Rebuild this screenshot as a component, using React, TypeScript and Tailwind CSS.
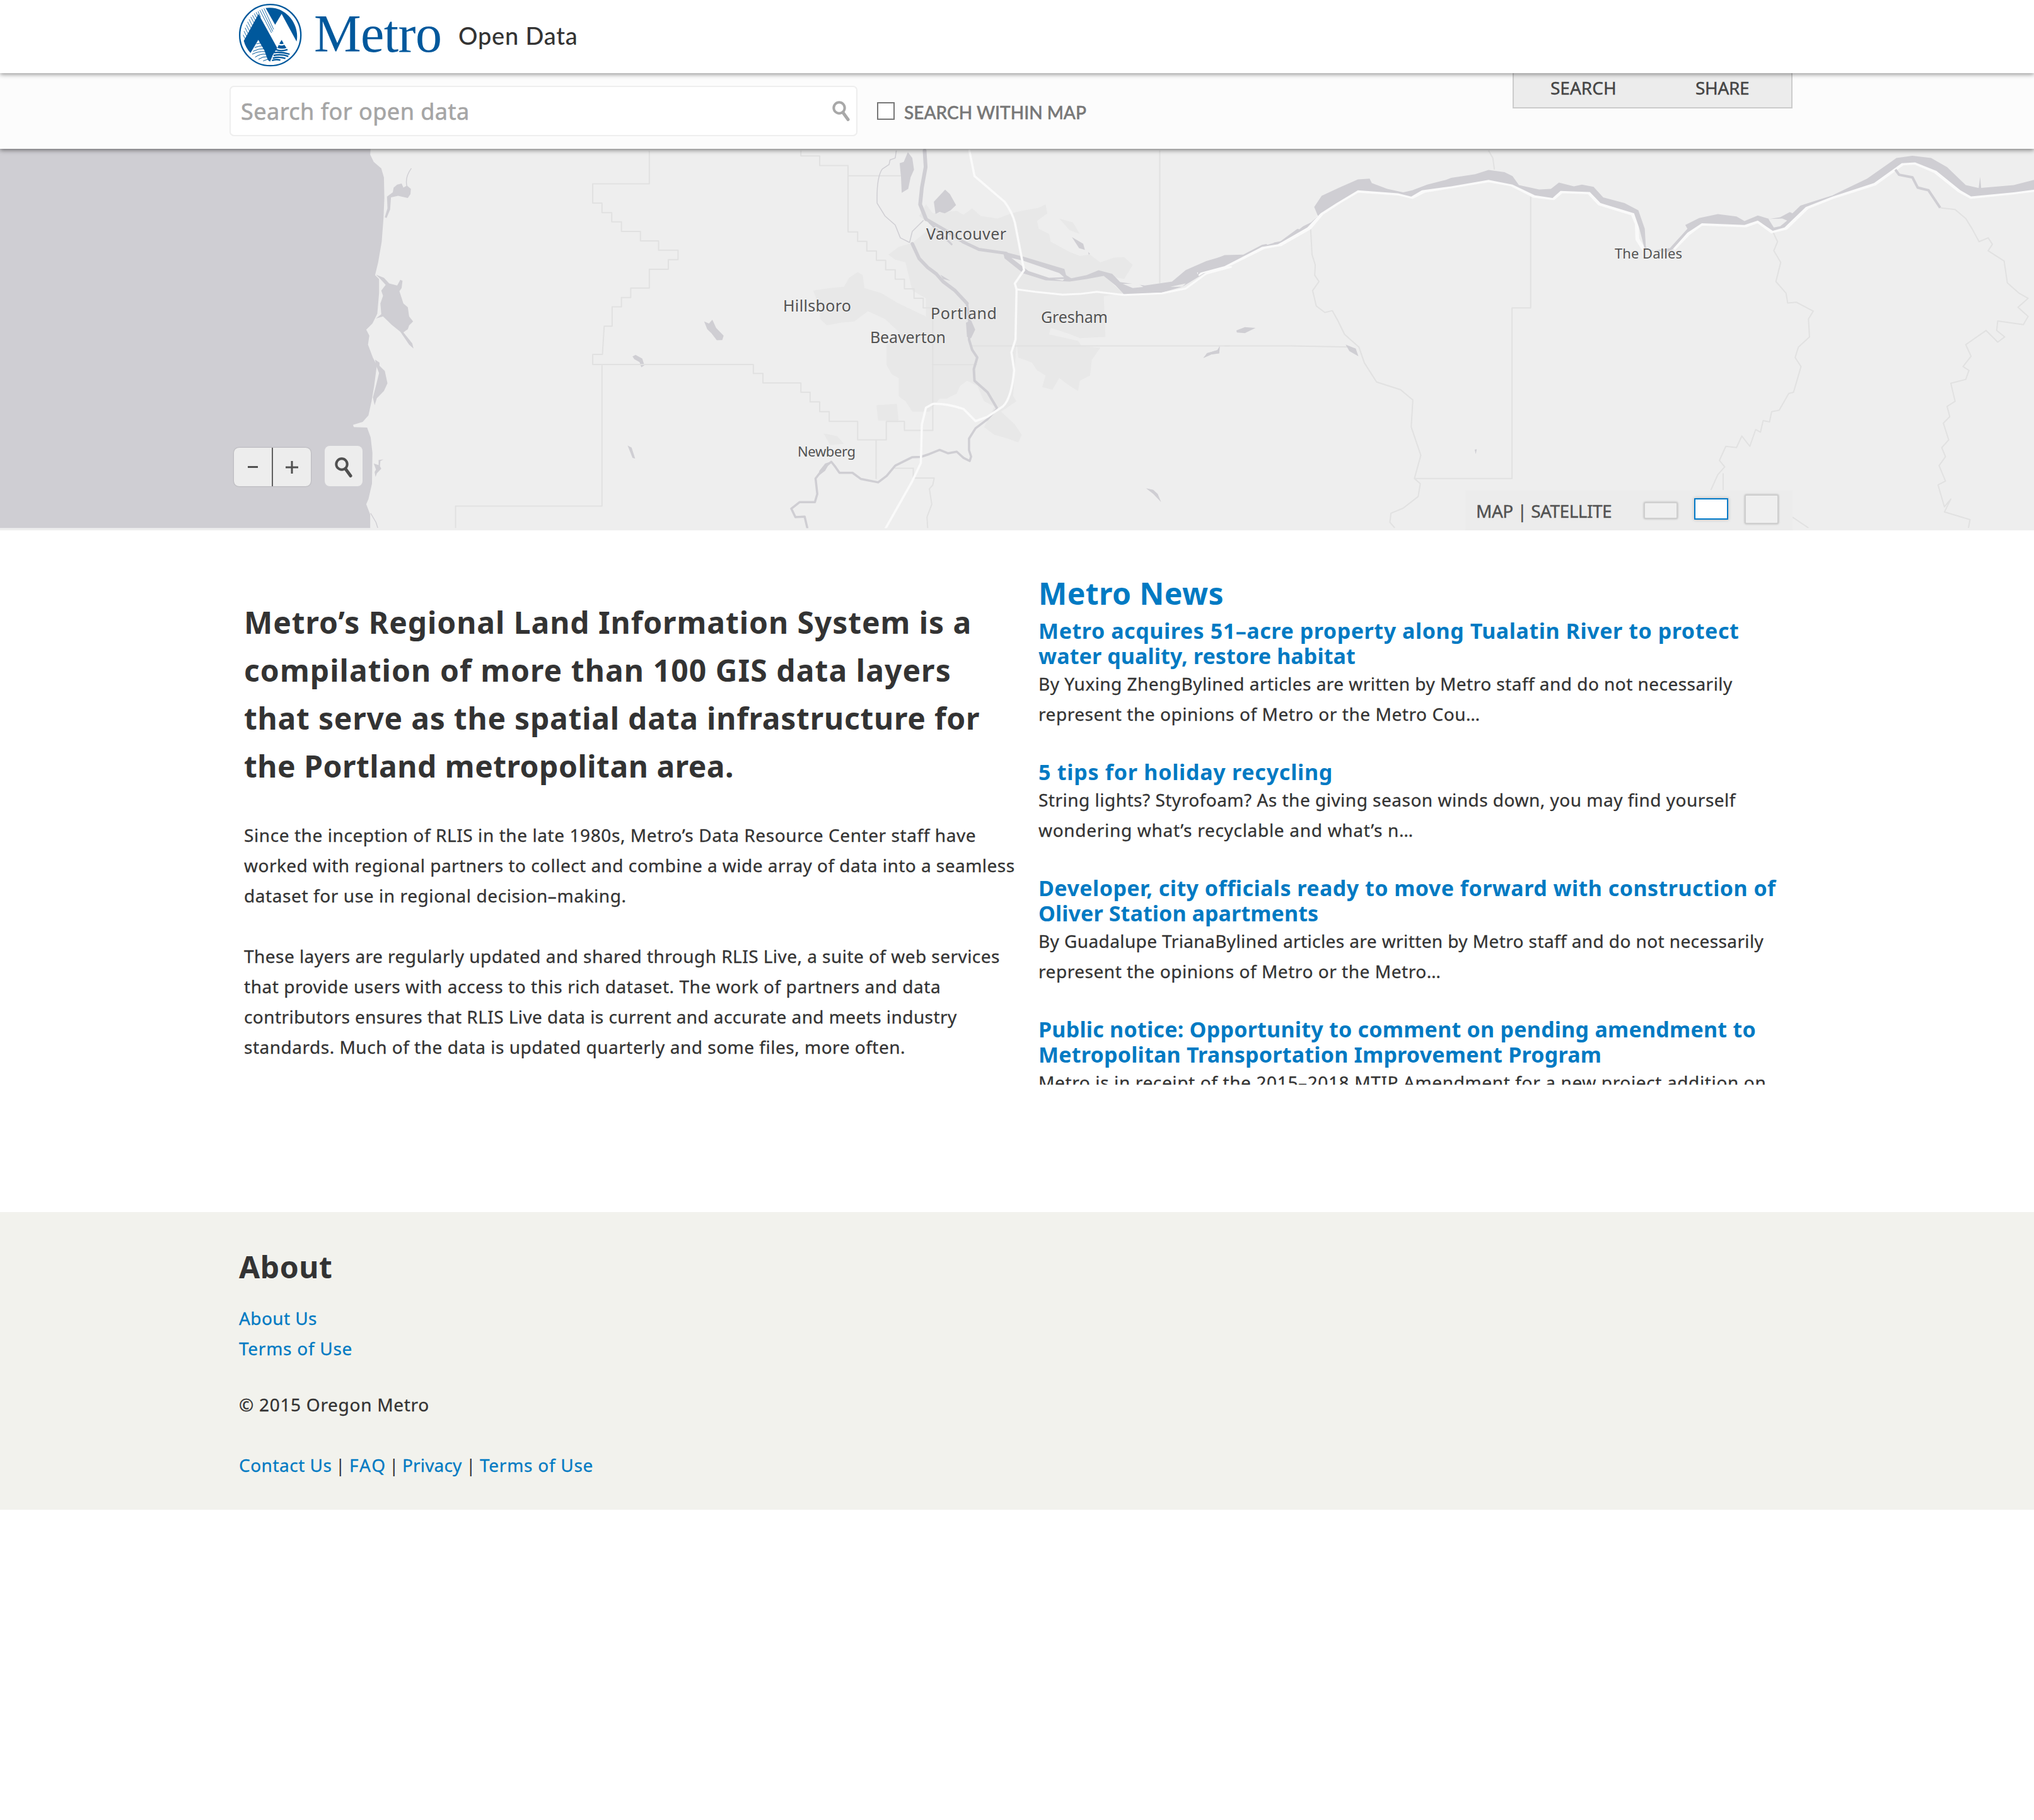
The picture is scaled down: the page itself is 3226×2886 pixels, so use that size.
import React from "react";

const WATER = "#cfced3";
const LAND = "#eeeeee";
const URBAN = "#e8e8e8";
const BOUNDARY = "#e1e1e1";

type Line = { text: string; tracking: string };

const intro: Line[] = [
  { text: "Metro’s Regional Land Information System is a", tracking: "tracking-[0.93px]" },
  { text: "compilation of more than 100 GIS data layers", tracking: "tracking-[1.06px]" },
  { text: "that serve as the spatial data infrastructure for", tracking: "tracking-[0.763px]" },
  { text: "the Portland metropolitan area.", tracking: "tracking-[0.5px]" },
];

const paragraphs: Line[][] = [
  [
    { text: "Since the inception of RLIS in the late 1980s, Metro’s Data Resource Center staff have", tracking: "tracking-[0.582px]" },
    { text: "worked with regional partners to collect and combine a wide array of data into a seamless", tracking: "tracking-[0.47px]" },
    { text: "dataset for use in regional decision–making.", tracking: "tracking-[0.589px]" },
  ],
  [
    { text: "These layers are regularly updated and shared through RLIS Live, a suite of web services", tracking: "tracking-[0.46px]" },
    { text: "that provide users with access to this rich dataset. The work of partners and data", tracking: "tracking-[0.55px]" },
    { text: "contributors ensures that RLIS Live data is current and accurate and meets industry", tracking: "tracking-[0.428px]" },
    { text: "standards. Much of the data is updated quarterly and some files, more often.", tracking: "tracking-[0.508px]" },
  ],
];

const news: { title: Line[]; body: Line[] }[] = [
  {
    title: [
      { text: "Metro acquires 51–acre property along Tualatin River to protect", tracking: "tracking-[0.57px]" },
      { text: "water quality, restore habitat", tracking: "tracking-[0.107px]" },
    ],
    body: [
      { text: "By Yuxing ZhengBylined articles are written by Metro staff and do not necessarily", tracking: "tracking-[0.463px]" },
      { text: "represent the opinions of Metro or the Metro Cou…", tracking: "tracking-[0.56px]" },
    ],
  },
  {
    title: [{ text: "5 tips for holiday recycling", tracking: "tracking-[0.75px]" }],
    body: [
      { text: "String lights? Styrofoam? As the giving season winds down, you may find yourself", tracking: "tracking-[0.494px]" },
      { text: "wondering what’s recyclable and what’s n…", tracking: "tracking-[0.701px]" },
    ],
  },
  {
    title: [
      { text: "Developer, city officials ready to move forward with construction of", tracking: "tracking-[0.463px]" },
      { text: "Oliver Station apartments", tracking: "tracking-[0.109px]" },
    ],
    body: [
      { text: "By Guadalupe TrianaBylined articles are written by Metro staff and do not necessarily", tracking: "tracking-[0.4px]" },
      { text: "represent the opinions of Metro or the Metro…", tracking: "tracking-[0.54px]" },
    ],
  },
  {
    title: [
      { text: "Public notice: Opportunity to comment on pending amendment to", tracking: "tracking-[0.245px]" },
      { text: "Metropolitan Transportation Improvement Program", tracking: "tracking-[0.23px]" },
    ],
    body: [{ text: "Metro is in receipt of the 2015–2018 MTIP Amendment for a new project addition on", tracking: "tracking-[0.63px]" }],
  },
];

function Lines({ lines }: { lines: Line[] }) {
  return (
    <>
      {lines.map((l) => (
        <span key={l.text} className={`block whitespace-nowrap ${l.tracking}`}>
          {l.text}
        </span>
      ))}
    </>
  );
}

function Logo() {
  return (
    <svg className="h-[112px] w-[112px] shrink-0" viewBox="0 0 336 336">
      <circle cx="164" cy="167" r="145.5" fill="#fff" stroke="#00589c" strokeWidth="7" />
      <path d="M142 38 Q165 34 190 40 C240 52 286 100 291 160 Q293 184 289 197 L218 66 L187 118 Z" fill="#00589c" />
      <path d="M108 67 L38 194 Q46 226 70 252 L107 190 L136 240 L152 285 L163 293 L176 262 L197 228 Z" fill="#00589c" />
      <g stroke="#00589c" strokeWidth="2.6" fill="none">
        <path d="M134 40 L180 140 M124 44 L176 150 M114 48 L170 156 M106 54 L118 82" />
        <path d="M97 58 L104 74 M88 64 L98 84 M79 72 L92 96 M71 80 L86 108 M63 92 L79 122 M56 104 L72 134 M50 118 L65 148 M44 132 L58 160 M39 148 L51 172 M35 166 L44 184" />
      </g>
      <g stroke="#00589c" strokeWidth="3" fill="none">
        <path d="M98 208 Q108 208 118 204 M90 226 Q110 218 128 218 M82 244 Q110 230 134 232 M78 258 Q110 242 140 246 M92 272 Q118 254 144 258 M108 282 Q130 268 148 270 M130 290 L152 282" />
      </g>
      <path d="M218 190 L228 208 Q218 212 207 208 Z M204 214 Q218 220 231 213 L241 228 Q222 236 198 228 Z" fill="#00589c" />
      <g stroke="#00589c" fill="none" strokeWidth="7">
        <path d="M190 236 Q216 246 246 236 M182 250 Q220 246 256 258 M180 264 Q214 256 250 268 M176 277 Q204 268 236 278 M172 288 Q192 280 212 286" />
      </g>
    </svg>
  );
}

function Magnifier({ className }: { className: string }) {
  return (
    <svg className={className} viewBox="0 0 28 33" fill="none" stroke="currentColor">
      <circle cx="11" cy="11" r="8.7" strokeWidth="4" />
      <path d="M17 18.5 L25 29.5" strokeWidth="5" strokeLinecap="round" />
    </svg>
  );
}

/* x, baseline, width, font size */
const cities: [string, number, number, number, number][] = [
  ["Vancouver", 1469, 380, 127, 25],
  ["Hillsboro", 1242, 494, 108, 25],
  ["Portland", 1476, 506, 105, 25],
  ["Gresham", 1651, 512, 106, 25],
  ["Beaverton", 1380, 544, 120, 25],
  ["Newberg", 1265, 724, 92, 22],
  ["The Dalles", 2561, 410, 107, 22],
];

function MapDrawing() {
  return (
    <svg className="absolute inset-0 h-full w-full" viewBox="0 236 3226 605" fontFamily="'Noto Sans', sans-serif">
      {/* coast */}
      <g transform="translate(0 220) scale(0.70152 0.40816)" fill={WATER} strokeLinejoin="round">
        <path d="M0 30 H838 L837 62 L845 90 L862 115 L868 150 L869 230 L867 310 L863 400 L855 480 L848 530 L857 545 L857 600 L853 680 L842 718 L828 742 L835 765 L832 800 L843 850 L852 880 L846 960 L840 1020 L833 1075 L820 1100 L798 1112 L800 1120 L830 1122 L838 1160 L842 1220 L841 1340 L833 1400 L828 1420 L837 1460 L837 1513 H0Z" />
        <path d="M890 190 L898 178 L908 174 L912 190 L920 182 L929 195 L928 215 L922 230 L900 222 L884 228 L882 275 L874 308 L870 305 L876 270 L875 225 L888 208Z" />
        <path d="M850 528 L868 540 L880 562 L898 570 L905 548 L910 552 L908 580 L903 592 L912 640 L922 655 L925 690 L934 710 L925 725 L922 740 L912 752 L932 795 L935 815 L925 800 L905 750 L885 722 L866 690 L850 698 L862 682 L860 640 L866 610 L862 590 L872 568 L860 545Z" />
        <path d="M848 858 L858 870 L858 882 L870 902 L876 950 L868 980 L852 1008 L847 1035 L843 1005 L850 960 L857 910 L850 880Z" />
        <path d="M845 1262 L856 1268 L856 1248 L867 1246 L860 1252 L859 1272 L862 1282 L852 1300 L849 1314 L847 1295 L850 1285Z" />
        <path d="M1430 846 L1437 840 L1452 854 L1457 880 L1450 888 L1446 868 L1434 856Z M1419 1192 L1428 1200 L1436 1243 L1430 1240Z" />
        <path d="M930 115 Q915 150 920 185 M838 1455 L850 1490 L854 1512" fill="none" stroke={WATER} strokeWidth="2" />
        <path
          d="M1468 48 V175 H1340 V250 H1361 V287 H1383 V323 H1405 V360 H1448 V397 H1489 V433 H1533 V470 H1511 V507 H1468 V580 H1426 V617 H1405 V653 H1384 V728 H1366 L1362 838 H1340 V877 H1570 M1361 877 V1427 H1030 V1513"
          fill="none" stroke={BOUNDARY} strokeWidth="2" vectorEffect="non-scaling-stroke"
        />
      </g>

      {/* Portland area */}
      <g transform="translate(1100 220) scale(0.5421 0.40816)" strokeLinejoin="round" strokeLinecap="round">
        <g fill={URBAN}>
          <path d="M680 255 L700 290 L770 280 L790 295 L815 270 L840 300 L890 310 L930 290 L960 280 L1010 268 L1030 255 L1035 290 L1005 320 L1010 350 L1040 370 L1045 400 L1100 440 L1130 455 L1160 450 L1190 480 L1230 462 L1260 460 L1285 490 L1260 545 L1200 530 L1255 600 L1200 612 L1205 770 L1130 775 L1100 758 L1045 735 L1040 760 L1125 785 L1135 805 L1190 812 L1165 860 L1160 920 L1130 940 L1125 980 L1100 960 L1070 930 L1050 975 L1020 965 L1030 920 L1005 900 L990 870 L950 850 L945 790 L935 1000 L945 1020 L900 1060 L940 1110 L960 1150 L950 1180 L920 1165 L880 1150 L850 1120 L880 1040 L850 1020 L830 960 L800 940 L780 960 L770 990 L740 1010 L720 1010 L690 1060 L640 1060 L620 1020 L600 1000 L600 930 L580 915 L565 880 L565 800 L600 750 L580 725 L560 700 L510 670 L490 690 L470 710 L430 715 L390 725 L370 700 L370 660 L350 590 L400 580 L440 575 L455 540 L480 518 L495 530 L500 580 L550 600 L600 640 L680 690 L680 620 L640 590 L620 480 L590 470 L570 450 L600 420 L640 405 L700 340 L660 300Z" />
          <path d="M535 1035 L595 1030 L600 1095 L540 1095Z M380 1145 L420 1155 L440 1185 L400 1190Z M1070 310 L1110 325 L1130 370 L1100 355Z" />
        </g>
        <g fill="none" stroke={BOUNDARY} strokeWidth="2">
          <path d="M314 48 V67 H369 V104 H452 V362 H480 V399 H507 V436 H535 V472 H562 V509 H590 V546 H617 V583 H645 V620 H672 V657 H700 V1133 H617 V1098 H564 V1170 H480 V1098 H397 V1060 H369 V1022 H341 V985 H314 V949 H203 V912 H175 V877 H-60" vectorEffect="non-scaling-stroke" />
          <path d="M452 144 H605 M1364 48 V560 M815 805 H1568 M700 878 H828 M534 1170 V1320 M590 1280 H643 V1318 H704 L700 1345 L690 1360 L697 1420 L683 1470 L685 1513" vectorEffect="non-scaling-stroke" />
        </g>
        <g fill={WATER}>
          <path d="M603 95 L615 90 L627 52 L640 75 L645 120 L635 150 L628 195 L609 210 L607 150Z" />
          <path d="M736 198 L750 215 L768 258 L752 278 L735 290 L720 284 L708 292 L703 245Z" />
          <path d="M31 710 L45 718 L55 703 L66 735 L88 765 L84 782 L68 783 L52 755 L40 740Z" />
          <path d="M1107 382 L1140 408 L1145 432 L1128 425Z M1155 440 L1160 448 L1156 450Z" />
          <path d="M1492 852 L1502 833 L1535 820 L1538 806 L1538 834 L1515 838Z" />
          <path d="M1324 1358 L1345 1364 L1358 1380 L1368 1412 L1345 1380Z" />
          <path d="M797 715 L812 705 L824 742 L812 775 L800 770Z M722 528 L752 552 L730 545Z M368 1290 L385 1262 L400 1255 L385 1290 L365 1310Z" />
          <path d="M905 438 L965 458 L1085 506 L1090 530 L1105 542 L1150 530 L1185 511 L1225 525 L1248 557 L1320 570 L1400 555 L1440 510 L1500 475 L1555 454 L1572 454 L1572 495 L1500 518 L1430 575 L1370 598 L1260 606 L1235 570 L1200 533 L1150 545 L1100 555 L1030 550 L965 523 L910 465Z" />
        </g>
        <path d="M930 463 L965 474 L1070 522 L1084 538 L1040 540 L980 514Z M1256 564 L1300 562 L1316 576 L1285 580Z M1055 545 L1085 545 L1080 551Z M1395 575 L1440 562 L1430 575Z" fill={LAND} />
        <g fill="none" stroke={WATER}>
          <path d="M676 46 L679 110 L668 190 L663 255 L680 312" strokeWidth="6" vectorEffect="non-scaling-stroke" />
          <path d="M680 312 L740 358 L790 402 L835 430 L915 445" strokeWidth="5" vectorEffect="non-scaling-stroke" />
          <path d="M690 325 L755 410" strokeWidth="3" vectorEffect="non-scaling-stroke" />
          <path d="M593 48 L590 75 L575 82 L572 100 L552 118 Q535 150 537 250 L560 300 L590 335 L605 385 L632 403 L640 360 L672 318" strokeWidth="1.5" vectorEffect="non-scaling-stroke" />
          <path d="M640 408 L660 465 L685 500 L710 525 L730 555 L765 590 L800 640" strokeWidth="5.5" vectorEffect="non-scaling-stroke" />
          <path d="M800 640 L808 720 L806 780 L815 820 L830 850 L820 895 L822 940 L860 985 L887 1045" strokeWidth="4" vectorEffect="non-scaling-stroke" />
          <path d="M887 1050 L860 1090 L825 1125 L806 1165 L806 1210 L812 1235 L808 1252 L790 1240 L770 1216 L745 1222 L720 1209 L690 1225 L665 1236 L640 1237 L590 1270 L565 1310 L540 1335 L490 1322 L465 1298 L427 1298 L415 1275 L403 1255 L380 1280 L357 1320 L362 1380 L355 1412 L310 1412 L286 1437 L298 1470 L325 1468 L333 1513" strokeWidth="3.5" vectorEffect="non-scaling-stroke" />
        </g>
        <g fill="none" stroke="#fafafa">
          <path d="M807 46 L822 145 L910 245 Q932 285 940 325 L967 510 L940 562 L945 585 L942 780 L930 830 L938 900 Q930 1010 905 1040 L860 1080 L825 1097 L790 1050 Q740 1028 700 1030 L680 1045 L668 1110 L665 1260 L640 1330 L562 1513" strokeWidth="3.5" vectorEffect="non-scaling-stroke" />
          <path d="M945 585 L1000 595 L1080 606 L1130 603 L1180 595 L1260 607 L1370 601 L1440 582 L1500 524 L1572 498" strokeWidth="3" vectorEffect="non-scaling-stroke" />
        </g>
      </g>

      {/* Columbia gorge */}
      <g transform="translate(1900 220) scale(0.84566 0.40816)" strokeLinejoin="round">
        <g fill="none" stroke={BOUNDARY}>
          <path d="M545 46 L553 75 L556 120 M624 225 V657 H589 V1320 H407 M50 805 H175 L285 809" strokeWidth="2" vectorEffect="non-scaling-stroke" />
          <path d="M211 340 L214 450 L220 490 L219 530 L227 555 L215 590 L222 650 L238 675 L252 668 L262 705 L275 760 L302 810 L312 870 L335 945 L380 975 L403 1015 L400 1120 L418 1230 L406 1320 L417 1340 L413 1390 L385 1435 L362 1455 L360 1490 L369 1512" strokeWidth="2" vectorEffect="non-scaling-stroke" />
          <path d="M1078 360 L1087 400 L1080 435 L1093 480 L1084 555 L1103 600 L1106 638 L1122 635 L1154 670 L1145 700 L1147 770 L1126 810 L1120 850 L1131 885 L1117 985 L1108 990 L1090 1055 L1076 1060 L1072 1100 L1060 1095 L1055 1140 L1046 1130 L1035 1195 L1020 1155 L1010 1200 L990 1195 L978 1250 L988 1275 L975 1305 L962 1365 M985 1300 L985 1365" strokeWidth="2" vectorEffect="non-scaling-stroke" />
          <path d="M1392 268 L1420 275 L1440 310 L1452 350 L1465 400 L1482 385 L1490 410 L1482 435 L1512 475 L1518 560 L1540 600 L1557 620 L1538 655 L1557 690 L1548 722 L1500 708 L1498 745 L1513 770 L1500 790 L1478 745 L1440 800 L1450 845 L1435 885 L1446 900 L1440 935 L1412 950 L1420 1020 L1405 1040 L1410 1080 L1398 1105 L1408 1170 L1395 1200 L1402 1235 L1390 1270 L1402 1330 L1388 1345 L1400 1430 L1412 1400 L1400 1450 L1448 1480 L1445 1512 M1115 1470 L1145 1512" strokeWidth="2" vectorEffect="non-scaling-stroke" />
        </g>
        <path d="M0 527 L10 515 L50 497 L125 420 L155 410 L210 345 L232 290 L265 245 L300 202 L375 213 L402 226 L425 202 L545 162 L588 178 L630 222 L667 231 L682 204 L733 208 L753 252 L815 291 L823 330 L824 390 L836 430 M892 428 L920 368 L945 330 L1027 337 L1050 320 L1076 360 L1103 346 L1143 266 L1190 227 L1270 174 L1322 96 L1345 93 L1382 126 L1428 202 L1450 226 L1530 209 L1568 199" fill="none" stroke="#fafafa" strokeWidth="6" vectorEffect="non-scaling-stroke" />
        <g fill={WATER}>
          <path d="M0 495 L35 465 L50 452 L85 450 L120 412 L155 398 L185 352 L212 325 L225 300 L218 265 L232 222 L265 190 L300 158 L322 155 L326 172 L355 195 L385 208 L402 200 L430 178 L465 160 L475 152 L520 138 L545 121 L575 130 L590 145 L602 180 L640 197 L662 195 L677 170 L705 185 L720 178 L742 187 L760 228 L800 250 L826 278 L838 350 L840 420 L850 436 L885 425 L918 350 L914 335 L940 308 L975 293 L1010 302 L1025 320 L1050 298 L1072 312 L1092 305 L1110 285 L1115 290 L1130 260 L1190 220 L1255 155 L1310 75 L1340 66 L1375 75 L1405 110 L1440 180 L1465 192 L1530 180 L1568 160 V198 L1530 208 L1450 224 L1430 200 L1385 125 L1345 92 L1320 95 L1268 172 L1190 225 L1140 265 L1100 345 L1078 358 L1050 318 L1025 335 L945 328 L918 365 L890 430 L880 440 L838 430 L828 350 L818 290 L755 250 L735 207 L680 203 L665 230 L632 220 L590 178 L545 160 L475 185 L420 200 L400 225 L375 212 L300 200 L260 250 L230 290 L205 345 L150 410 L120 420 L50 495 L5 520 L0 530Z" />
          <path d="M72 745 L88 732 L108 735 L88 755 L73 753Z M10 851 L18 833 L36 822 L41 806 L40 832 L25 838Z M277 800 L296 815 L301 845 L284 825Z M519 1208 L523 1206 L521 1225Z" />
          <path d="M1464 195 L1467 148 L1469 195Z" />
        </g>
        <path d="M1308 120 L1315 140 L1340 150 L1350 190 L1370 200 L1392 268" fill="none" stroke={WATER} strokeWidth="4" vectorEffect="non-scaling-stroke" />
        <path d="M1070 312 L1096 310 L1105 318 L1092 340 L1080 345Z M126 402 L145 395 L142 405 L130 412Z M182 345 L200 335 L190 352Z" fill={LAND} />
      </g>

      <rect x="0" y="837.5" width="3226" height="3.5" fill={LAND} />
      <g fill="#525252" stroke="#f1f1f1" strokeWidth="2" paintOrder="stroke">
        {cities.map(([name, x, y, w, size]) => (
          <text key={name} x={x} y={y} textLength={w} fontSize={size}>
            {name}
          </text>
        ))}
      </g>
    </svg>
  );
}

export default function App() {
  return (
    <div className="min-h-[2886px] w-[3226px] overflow-hidden bg-white font-['Noto_Sans',sans-serif] text-[28px] leading-[48px] text-[#333]">
      <header className="relative z-20 flex h-[116px] items-start bg-white pl-[374px] shadow-[0_2px_7px_rgba(0,0,0,0.42)]">
        <Logo />
        <span className="ml-3 w-[229px] font-['Liberation_Serif',serif] text-[84px] leading-[108px] tracking-[-0.57px] text-[#00589c]">Metro</span>
        <span className="font-[Lato,sans-serif] text-[38px] leading-[112px] font-medium tracking-[0.8px]">Open Data</span>
      </header>

      <div className="relative z-10 flex h-[120px] items-start bg-[#fcfcfc] pl-[364px] shadow-[0_2px_7px_rgba(0,0,0,0.5)]">
        <div className="mt-5 flex h-20 w-[996px] items-center justify-between rounded-[7px] border-2 border-[#eee] bg-white pr-[10px] pl-[16px]">
          <span className="pt-0.5 text-[36px] tracking-[0.48px] text-[#a5a5a5] [-webkit-text-stroke:0.6px_#a5a5a5]">Search for open data</span>
          <Magnifier className="h-[33px] w-[28px] text-[#a8a8a8]" />
        </div>
        <span className="mt-[46px] ml-[31px] h-7 w-7 border-2 border-[#777] bg-white" />
        <span className="mt-[38px] ml-[15px] font-[Lato,sans-serif] font-medium tracking-[0.03px] text-[#777] [-webkit-text-stroke:0.5px_#777]">SEARCH WITHIN MAP</span>
        <nav className="mr-[383px] ml-auto flex h-14 w-[444px] border-x-2 border-b-2 border-[#ccc] bg-[#ececec] pl-[58px] leading-[47px] text-[#444] [-webkit-text-stroke:0.4px_#444]">
          <span className="w-[230px]">SEARCH</span>
          <span className="tracking-[-0.36px]">SHARE</span>
        </nav>
      </div>

      <section className="relative h-[605px] bg-[#eee]">
        <MapDrawing />
        <div className="absolute bottom-[70px] left-[371px] flex items-end text-[#505050]">
          <div className="flex h-[61px] w-[122px] rounded-[8px] bg-[#ededed] shadow-[0_0_2px_rgba(0,0,0,0.3)]">
            <span className="flex w-[60px] items-center justify-center">
              <span className="h-[3px] w-4 bg-[#505050]" />
            </span>
            <span className="w-[2px] bg-[#606060]" />
            <svg className="m-auto h-[22px] w-[22px]" viewBox="0 0 22 22" stroke="#505050" strokeWidth="3">
              <path d="M1 11 H21 M11 1 V21" />
            </svg>
          </div>
          <div className="ml-[22px] flex h-[64px] w-[60px] items-center justify-center rounded-[8px] bg-[#ededed]">
            <Magnifier className="mt-1 h-[33px] w-[28px]" />
          </div>
        </div>
        <div className="absolute right-[383px] bottom-0 flex h-[63px] w-[519px] items-start bg-[#ececec] pl-[17px] text-[#525252]">
          <span className="mt-2 w-[266px] tracking-[-0.5px] whitespace-nowrap [-webkit-text-stroke:0.4px_#525252]">MAP | SATELLITE</span>
          <span className="mt-[18px] h-[27px] w-[54px] rounded-[3px] border-2 border-[#cfcfcf] bg-[#efefef] shadow-[0_0_3px_rgba(0,0,0,0.25)]" />
          <span className="mt-[12px] ml-[26px] h-[34px] w-[54px] border-2 border-[#0079c8] bg-white shadow-[0_0_5px_rgba(0,0,0,0.25)]" />
          <span className="mt-[6px] ml-[26px] h-[47px] w-[54px] rounded-[3px] border-2 border-[#cfcfcf] bg-[#efefef] shadow-[0_0_3px_rgba(0,0,0,0.25)]" />
        </div>
      </section>

      <main className="flex h-[1081px] items-start pl-[387px]">
        <div className="w-[1260px] pt-[108px]">
          <h1 className="text-[48px] leading-[76px] font-bold">
            <Lines lines={intro} />
          </h1>
          {paragraphs.map((p, i) => (
            <p key={i} className={i === 0 ? "mt-[47px] [-webkit-text-stroke:0.3px_#333]" : "mt-12 [-webkit-text-stroke:0.3px_#333]"}>
              <Lines lines={p} />
            </p>
          ))}
        </div>
        <div className="mt-[58px] h-[821px] w-[1200px] overflow-hidden pt-3">
          <h2 className="mb-[9px] text-[48px] leading-[60px] font-bold tracking-[0.44px] text-[#007ac3]">Metro News</h2>
          {news.map((n, i) => (
            <article key={i} className="mb-12">
              <h3 className="text-[34px] leading-[40px] font-bold text-[#007ac3]">
                <Lines lines={n.title} />
              </h3>
              <p className="[-webkit-text-stroke:0.3px_#333]">
                <Lines lines={n.body} />
              </p>
            </article>
          ))}
        </div>
      </main>

      <footer className="h-[472px] bg-[#f2f2ed] pt-[57px] pl-[379px]">
        <h2 className="text-[48px] leading-[60px] font-bold tracking-[0.56px]">About</h2>
        <ul className="mt-[27px] text-[#007ac3] [-webkit-text-stroke:0.3px_#007ac3]">
          <li className="tracking-[0.4px]">About Us</li>
          <li className="tracking-[0.73px]">Terms of Use</li>
        </ul>
        <p className="mt-[41px] tracking-[0.7px] [-webkit-text-stroke:0.3px_#333]">© 2015 Oregon Metro</p>
        <div className="mt-12 flex">
          <a className="w-[153px] tracking-[0.49px] text-[#007ac3] [-webkit-text-stroke:0.3px_#007ac3]">Contact Us</a>
          <span className="w-[22px]">|</span>
          <a className="w-[63px] tracking-[2px] text-[#007ac3] [-webkit-text-stroke:0.3px_#007ac3]">FAQ</a>
          <span className="w-[21px]">|</span>
          <a className="w-[101px] tracking-[0.15px] text-[#007ac3] [-webkit-text-stroke:0.3px_#007ac3]">Privacy</a>
          <span className="w-[22px]">|</span>
          <a className="tracking-[0.73px] text-[#007ac3] [-webkit-text-stroke:0.3px_#007ac3]">Terms of Use</a>
        </div>
      </footer>
    </div>
  );
}
